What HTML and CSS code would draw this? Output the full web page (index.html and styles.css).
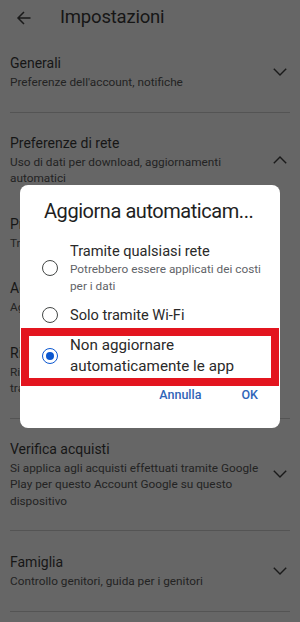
FILE: index.html
```html
<!DOCTYPE html>
<html lang="it">
<head>
<meta charset="utf-8">
<title>Impostazioni</title>
<link rel="stylesheet" href="styles.css">
</head>
<body>
<div class="page">
  <header class="topbar">
    <svg class="back" width="16" height="16" viewBox="0 0 16 16" aria-hidden="true">
      <path d="M14.5 8H2M8 2L2 8L8 14" fill="none" stroke="#1a1a1a" stroke-width="1.5"/>
    </svg>
    <h1 class="title">Impostazioni</h1>
  </header>

  <section class="sec sec-first">
    <div class="sec-head">
      <div class="sec-text">
        <div class="sec-title">Generali</div>
        <div class="sec-sub">Preferenze dell'account, notifiche</div>
      </div>
      <svg class="chev" width="14" height="8" viewBox="0 0 14 8"><polyline points="0.8,0.8 7,7 13.2,0.8" fill="none" stroke="#1a1a1a" stroke-width="1.4"/></svg>
    </div>
  </section>

  <section class="sec">
    <div class="sec-head">
      <div class="sec-text">
        <div class="sec-title">Preferenze di rete</div>
        <div class="sec-sub">Uso di dati per download, aggiornamenti automatici</div>
      </div>
      <svg class="chev" width="14" height="8" viewBox="0 0 14 8"><polyline points="0.8,7.2 7,1 13.2,7.2" fill="none" stroke="#1a1a1a" stroke-width="1.4"/></svg>
    </div>
    <div class="item">
      <div class="sec-title">Preferenze download app</div>
      <div class="sec-sub">Tramite qualsiasi rete</div>
    </div>
    <div class="item">
      <div class="sec-title">Aggiornamento automatico app</div>
      <div class="sec-sub">Aggiorna le app tramite qualsiasi rete</div>
    </div>
    <div class="item">
      <div class="sec-title">Riproduzione automatica video</div>
      <div class="sec-sub">Riproduci automaticamente i video solo tramite Wi-Fi</div>
    </div>
  </section>

  <section class="sec">
    <div class="sec-head">
      <div class="sec-text">
        <div class="sec-title">Verifica acquisti</div>
        <div class="sec-sub">Si applica agli acquisti effettuati tramite Google Play per questo Account Google su questo dispositivo</div>
      </div>
      <svg class="chev" width="14" height="8" viewBox="0 0 14 8"><polyline points="0.8,0.8 7,7 13.2,0.8" fill="none" stroke="#1a1a1a" stroke-width="1.4"/></svg>
    </div>
  </section>

  <section class="sec sec-last">
    <div class="sec-head">
      <div class="sec-text">
        <div class="sec-title">Famiglia</div>
        <div class="sec-sub">Controllo genitori, guida per i genitori</div>
      </div>
      <svg class="chev" width="14" height="8" viewBox="0 0 14 8"><polyline points="0.8,0.8 7,7 13.2,0.8" fill="none" stroke="#1a1a1a" stroke-width="1.4"/></svg>
    </div>
  </section>
</div>

<div class="dialog" role="dialog">
  <div class="dlg-title">Aggiorna automaticam...</div>
  <div class="options">
    <div class="opt">
      <span class="radio"></span>
      <div class="opt-text">
        <div class="opt-title">Tramite qualsiasi rete</div>
        <div class="opt-sub">Potrebbero essere applicati dei costi per i dati</div>
      </div>
    </div>
    <div class="opt">
      <span class="radio"></span>
      <div class="opt-text">
        <div class="opt-title">Solo tramite Wi-Fi</div>
      </div>
    </div>
    <div class="opt">
      <span class="radio radio-on"></span>
      <div class="opt-text">
        <div class="opt-title opt-big">Non aggiornare automaticamente le app</div>
      </div>
    </div>
  </div>
  <div class="actions">
    <span class="btn">Annulla</span>
    <span class="btn">OK</span>
  </div>
  <div class="highlight"></div>
</div>
</body>
</html>
```

FILE: styles.css
```css
html, body {
  margin: 0;
  padding: 0;
}
body {
  background: #666666;
  font-family: Roboto, "Noto Sans", "Liberation Sans", sans-serif;
  width: 300px;
  height: 622px;
  overflow: hidden;
}
.page {
  display: flex;
  flex-direction: column;
}
.topbar {
  height: 34px;
  display: flex;
  align-items: center;
}
.back {
  margin-left: 16px;
  margin-top: 1px;
}
.title {
  margin: 0 0 0 28px;
  font-size: 18.5px;
  font-weight: 400;
  color: #161616;
  letter-spacing: -0.2px;
}
.sec {
  margin: 0 10px;
  padding: 20px 0 21px;
  border-bottom: 1px solid #545454;
}
.sec-first {
  padding-top: 19px;
}
.sec-last {
  padding-top: 21px;
}
.sec-head {
  display: flex;
  align-items: center;
}
.sec-text {
  flex: 1;
  padding-right: 4px;
}
.sec-title {
  font-size: 14px;
  line-height: 21px;
  color: #161616;
  white-space: nowrap;
}
.sec-sub {
  font-size: 11.8px;
  line-height: 16.5px;
  color: #232323;
}
.chev {
  margin-right: 3px;
  flex: none;
}
.item {
  margin-top: 27px;
  padding-right: 40px;
}

.dialog {
  position: fixed;
  left: 20px;
  top: 185px;
  width: 260px;
  height: 243px;
  box-sizing: border-box;
  background: #ffffff;
  border-radius: 8px;
  padding: 13px 11px 0 22px;
}
.dlg-title {
  padding-left: 2px;
  font-size: 20px;
  line-height: 26px;
  letter-spacing: -0.45px;
  color: #1f1f1f;
  white-space: nowrap;
}
.options {
  padding-top: 13px;
  display: flex;
  flex-direction: column;
  gap: 2px;
}
.opt {
  display: flex;
  align-items: center;
  gap: 12px;
  padding: 4px 0;
}
.radio {
  flex: none;
  width: 16px;
  height: 16px;
  box-sizing: border-box;
  border: 1.8px solid #444746;
  border-radius: 50%;
  display: flex;
  align-items: center;
  justify-content: center;
}
.radio-on {
  border-color: #0b57d0;
}
.radio-on::after {
  content: "";
  width: 8px;
  height: 8px;
  border-radius: 50%;
  background: #0b57d0;
}
.opt-title {
  font-size: 14.6px;
  line-height: 20px;
  color: #2a2a2a;
}
.opt-big {
  font-size: 15.2px;
  line-height: 21px;
  padding-right: 14px;
}
.opt-sub {
  font-size: 11.8px;
  line-height: 17px;
  color: #5f6368;
}
.actions {
  margin-top: 4px;
  padding-right: 11px;
  display: flex;
  justify-content: flex-end;
  gap: 40px;
}
.btn {
  font-size: 12.5px;
  line-height: 20px;
  font-weight: 500;
  color: #2f65b8;
}
.highlight {
  position: absolute;
  left: 1px;
  top: 143px;
  width: 258px;
  height: 58px;
  box-sizing: border-box;
  border: 8px solid #e3151f;
}
```
